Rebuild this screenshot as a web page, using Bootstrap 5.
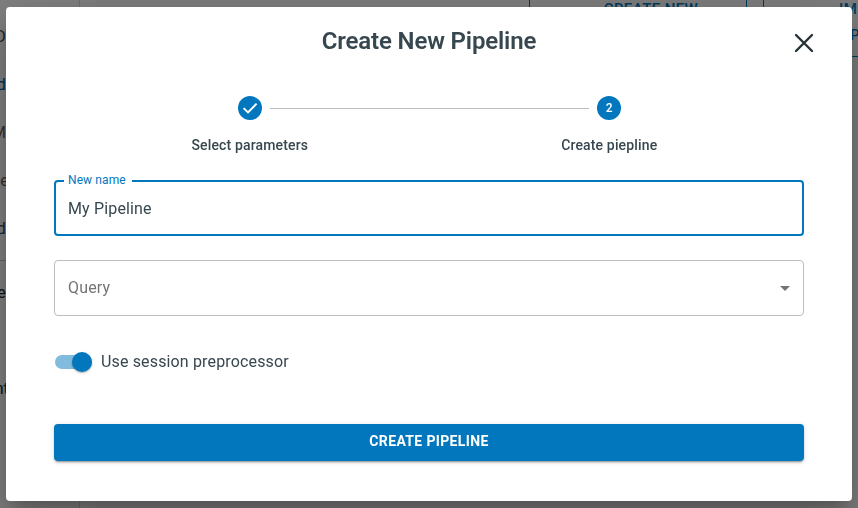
<!DOCTYPE html>
<html lang="en">
<head>
<meta charset="utf-8">
<meta name="viewport" content="width=device-width, initial-scale=1">
<title>Create New Pipeline</title>
<link href="https://cdn.jsdelivr.net/npm/bootstrap@5.3.0/dist/css/bootstrap.min.css" rel="stylesheet">
<style>
:root { --brand: #0277bd; --ink: #37474f; }
body { font-family: Roboto, "Liberation Sans", sans-serif; color: var(--ink); background: #fff; height: 508px; overflow: hidden; letter-spacing: .15px; }
/* page behind the dialog */
.page { height: 508px; }
.side { width: 80px; border-right: 1px solid #ddd; }
.side-item { width: 6px; height: 48px; line-height: 48px; font-size: 16px; white-space: nowrap; }
.side-wide { width: 9px; }
.side-items { padding-top: 13px; }
.side-link { color: #01579b; }
.side-warm { color: #7a5c48; }
.side-rule { border-top: 1px solid #ccc; margin-top: 7px; }
.gutter { width: 15px; }
.content { background: #fafafa; }
.tool-btn { border: 1px solid var(--brand); border-radius: 4px; color: var(--brand); font-weight: 500; font-size: 15px; line-height: 26px; height: 75px; margin-top: -18px; padding-top: 13px; letter-spacing: .4px; flex: none; }
.tool-new { width: 218px; margin-left: 434px; padding-left: 26px; }
.tool-import { width: 195px; margin-left: 16px; padding-left: 75px; }
.tool-second { padding-left: 11px; }
.shade { background: rgba(0,0,0,.5); }
/* dialog */
.dialog-box { width: 846px; height: 494px; margin: 7px 0 0 6px; border-radius: 4px; padding: 0 48px;
  box-shadow: 0 11px 15px -7px rgba(0,0,0,.2), 0 24px 38px 3px rgba(0,0,0,.14), 0 9px 46px 8px rgba(0,0,0,.12); }
.dialog-head { height: 89px; }
.dialog-title { font-size: 24px; font-weight: 600; line-height: 32px; padding-top: 18px; letter-spacing: -.15px; }
.close-btn { right: -16px; top: 20px; width: 32px; height: 32px; color: #263238; }
.steps { margin: 0 15px 0 16px; height: 84px; }
.step-col { width: 359.5px; }
.dot { width: 24px; height: 24px; background: var(--brand); font-size: 12px; letter-spacing: 0; font-weight: 500; }
.step-label { font-size: 14px; font-weight: 500; line-height: 20px; margin-top: 15px; letter-spacing: .15px; }
.connector { height: 1px; background: #bdbdbd; left: 200px; top: 12px; width: 319px; }
.field { height: 56px; border-radius: 4px; padding: 0 14px; font-size: 16px; }
.field-active { border: 2px solid var(--brand); padding: 2px 12px 0; }
.field-label { left: 8px; top: -11px; padding: 0 6px 0 4px; font-size: 12px; line-height: 18px; color: var(--brand); background: #fff; letter-spacing: .1px; }
.field-select { border: 1px solid #bdbdbd; margin-top: 24px; color: #757575; padding: 0 13px; }
.toggle-row { margin-top: 35px; height: 22px; }
.track { width: 37px; height: 14px; border-radius: 7px; background: #81bbde; margin-left: 1px; }
.thumb { width: 20px; height: 20px; background: var(--brand); box-shadow: 0 1px 2px rgba(0,0,0,.35); }
.toggle-text { margin-left: 9px; font-size: 16px; }
.submit-btn, .submit-btn:hover { background: var(--brand); color: #fff; height: 37px; margin-top: 51px; border: 0; border-radius: 4px; font-size: 14px; font-weight: 700; line-height: 24px; padding: 5px 0 8px; letter-spacing: .35px;
  box-shadow: 0 3px 1px -2px rgba(0,0,0,.2), 0 2px 2px rgba(0,0,0,.14), 0 1px 5px rgba(0,0,0,.12); }
</style>
</head>
<body>
<div class="page d-flex overflow-hidden" aria-hidden="true">
  <div class="side flex-shrink-0">
    <div class="side-items">
      <div class="side-item d-flex justify-content-end">D</div>
      <div class="side-item side-link d-flex justify-content-end">d</div>
      <div class="side-item side-warm d-flex justify-content-end">M</div>
      <div class="side-item side-warm side-wide d-flex justify-content-end">de</div>
      <div class="side-item d-flex justify-content-end">d</div>
    </div>
    <div class="side-rule pt-2"></div>
    <div class="side-item d-flex justify-content-end text-dark">e</div>
    <div class="side-item"></div>
    <div class="side-item side-wide d-flex justify-content-end text-dark">nt</div>
  </div>
  <div class="gutter flex-shrink-0"></div>
  <div class="content flex-grow-1 d-flex overflow-hidden">
    <div class="tool-btn tool-new text-center">CREATE NEW</div>
    <div class="tool-btn tool-import">IMPORT<br><span class="tool-second">P</span></div>
  </div>
</div>

<div class="shade position-fixed top-0 start-0 w-100 h-100 overflow-hidden">
  <div class="dialog-box bg-white" role="dialog" aria-labelledby="dlgTitle">
    <div class="dialog-head position-relative">
      <h2 class="dialog-title text-center m-0" id="dlgTitle">Create New Pipeline</h2>
      <button type="button" class="close-btn btn p-0 border-0 position-absolute d-flex" aria-label="Close">
        <svg width="32" height="32" viewBox="0 0 32 32" fill="none" stroke="currentColor" stroke-width="2.4" stroke-linecap="round"><path d="M8 8l16 16M24 8L8 24"/></svg>
      </button>
    </div>
    <div class="steps d-flex position-relative">
      <div class="connector position-absolute"></div>
      <div class="step-col d-flex flex-column align-items-center">
        <span class="dot rounded-circle d-flex align-items-center justify-content-center text-white">
          <svg width="24" height="24" viewBox="0 0 24 24" fill="none" stroke="#fff" stroke-width="2"><path d="M5.6 12.1l4.4 4.3L18.6 7.6"/></svg>
        </span>
        <span class="step-label">Select parameters</span>
      </div>
      <div class="step-col d-flex flex-column align-items-center">
        <span class="dot rounded-circle d-flex align-items-center justify-content-center text-white">2</span>
        <span class="step-label">Create piepline</span>
      </div>
    </div>
    <div class="field field-active position-relative d-flex align-items-center">
      <span class="field-label position-absolute">New name</span>
      <span>My Pipeline</span>
    </div>
    <div class="field field-select d-flex align-items-center justify-content-between">
      <span>Query</span>
      <svg width="10" height="5" viewBox="0 0 10 5"><path d="M0 0h10L5 5z" fill="#757575"/></svg>
    </div>
    <div class="toggle-row d-flex align-items-center">
      <span class="track d-flex align-items-center justify-content-end"><span class="thumb rounded-circle"></span></span>
      <span class="toggle-text">Use session preprocessor</span>
    </div>
    <button type="button" class="submit-btn btn w-100 d-block">CREATE PIPELINE</button>
  </div>
</div>
<script src="https://cdn.jsdelivr.net/npm/bootstrap@5.3.0/dist/js/bootstrap.bundle.min.js"></script>
</body>
</html>
